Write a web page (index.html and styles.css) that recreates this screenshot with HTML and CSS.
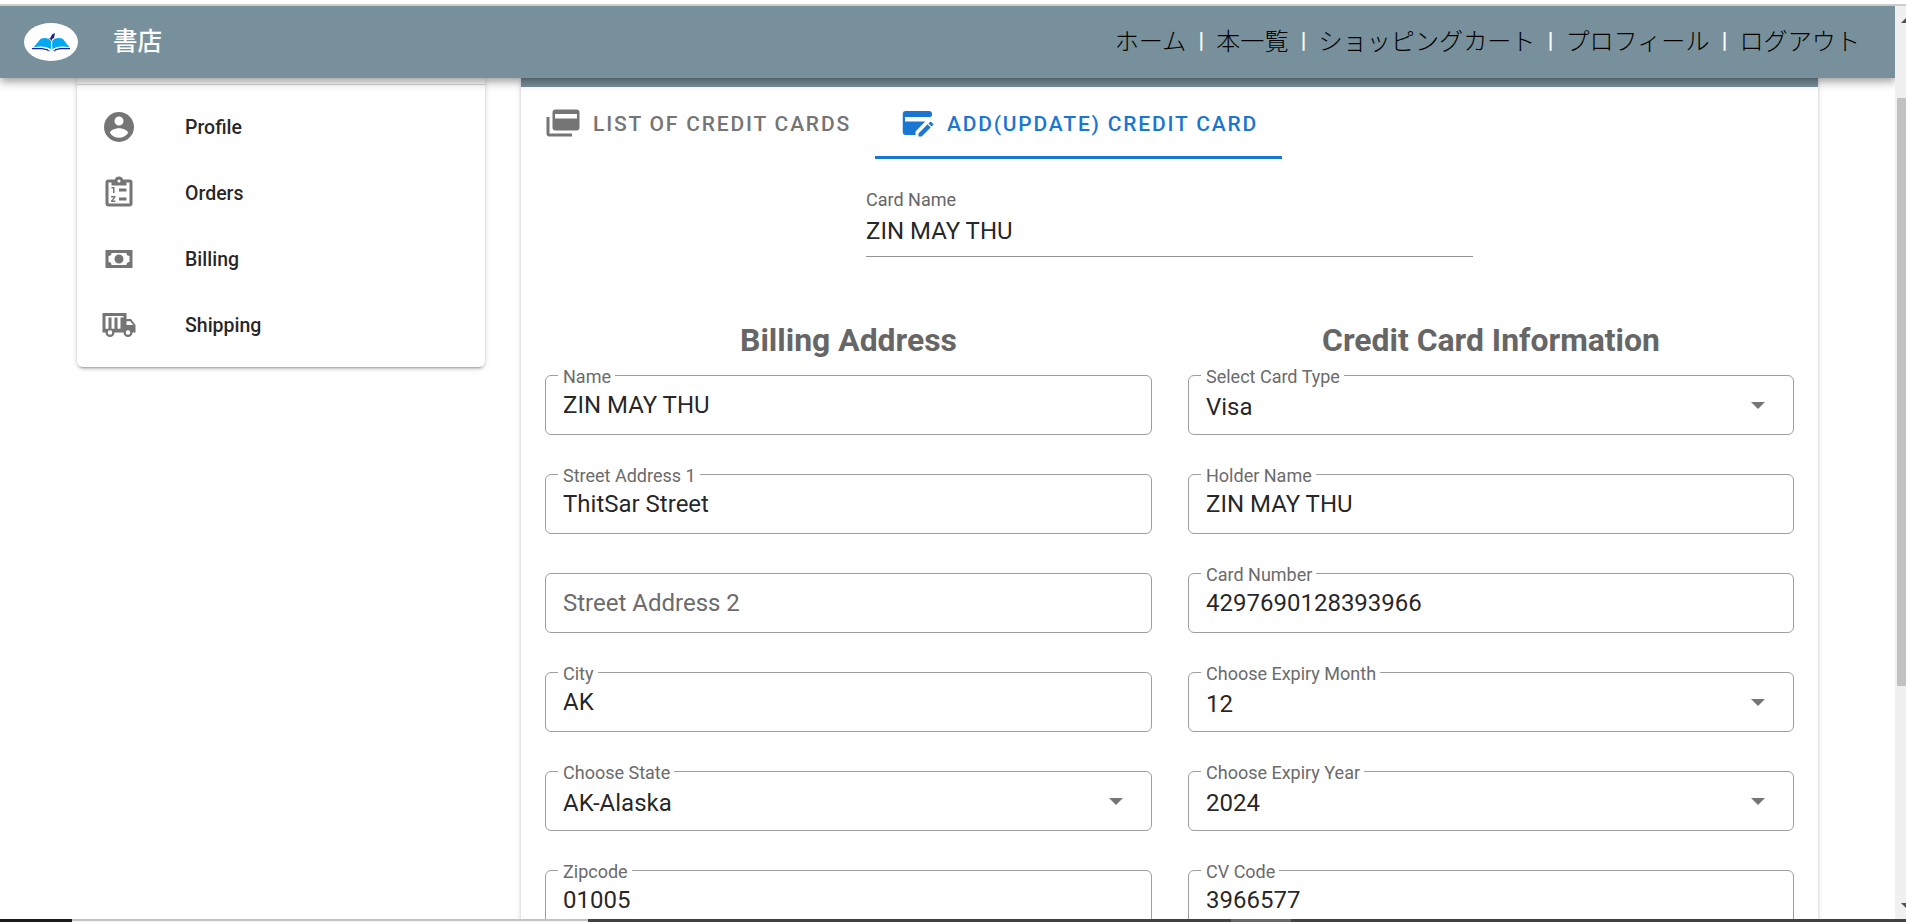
FILE: index.html
```html
<!DOCTYPE html>
<html lang="ja">
<head>
<meta charset="utf-8">
<title>書店</title>
<link rel="stylesheet" href="styles.css">
</head>
<body>
<div class="window">
  <div class="window-edge"></div>
  <div class="viewport">
    <div class="page">
      <header class="app-bar">
        <svg class="logo" viewBox="0 0 54 38">
          <ellipse cx="27" cy="19" rx="27" ry="19" fill="#fff"/>
          <path d="M9.500 24.500 16.500 16Q18 15 21 15 25 15.200 27 18V26Q19 22 9.500 24.500ZM45.500 24.500 39 16Q37 15 34 15 30 15.200 28.200 18V26Q36 22 45.500 24.500Z" fill="#03a9f0"/>
          <path d="M8 25.600H18L24 26.800M46 25.600H36L31 26.800" fill="none" stroke="#23238e" stroke-width="1.200"/>
          <path d="M24.500 15.500 26 15.500 28 11.500 31 10 30 15 28 16V18L26.500 16.500Z" fill="#23238e"/>
          <path d="M23.500 27.700h2M29.500 27.700h2" stroke="#23238e" stroke-width="1"/>
        </svg>
        <div class="brand">書店</div>
        <nav class="nav">
          <a>ホーム</a><i>|</i><a>本一覧</a><i>|</i><a>ショッピングカート</a><i>|</i><a>プロフィール</a><i>|</i><a>ログアウト</a>
        </nav>
      </header>
      <main class="content">
        <aside class="menu">
          <div class="menu-item">
            <svg class="icon" viewBox="0 0 24 24"><path d="M12,19.2C9.5,19.2 7.29,17.92 6,16C6.03,14 10,12.9 12,12.9C14,12.9 17.97,14 18,16C16.71,17.92 14.5,19.2 12,19.2M12,5A3,3 0 0,1 15,8A3,3 0 0,1 12,11A3,3 0 0,1 9,8A3,3 0 0,1 12,5M12,2A10,10 0 0,0 2,12A10,10 0 0,0 12,22A10,10 0 0,0 22,12C22,6.47 17.5,2 12,2Z"/></svg>
            <span>Profile</span>
          </div>
          <div class="menu-item">
            <svg class="icon" viewBox="0 0 24 24"><path fill-rule="evenodd" d="M19,3H14.82C14.4,1.84 13.3,1 12,1S9.600,1.840 9.180,3H5A2,2 0 0 0 3,5V19A2,2 0 0 0 5,21H19A2,2 0 0 0 21,19V5A2,2 0 0 0 19,3ZM12,3A1,1 0 1 1 12,5A1,1 0 1 1 12,3ZM5,5H7V7H17V5H19V19H5Z"/><path d="M12,9H17V11H12ZM12,15H17V17H12ZM7,8H9V12H8V9H7ZM6.750,14H9.600V15L7.900,17H9.600V18H6.750V17L8.500,15H6.750Z"/></svg>
            <span>Orders</span>
          </div>
          <div class="menu-item">
            <svg class="icon" viewBox="0 0 24 24"><path d="M3,6H21V18H3V6M12,9A3,3 0 0,1 15,12A3,3 0 0,1 12,15A3,3 0 0,1 9,12A3,3 0 0,1 12,9M7,8A2,2 0 0,1 5,10V14A2,2 0 0,1 7,16H17A2,2 0 0,1 19,14V10A2,2 0 0,1 17,8H7Z"/></svg>
            <span>Billing</span>
          </div>
          <div class="menu-item">
            <svg class="icon" viewBox="0 0 24 24"><path fill-rule="evenodd" d="M1,4H17V8H20L23,12V17H21A3,3 0 0 1 15,17H9A3,3 0 0 1 3,17H1ZM3,6V14.500H5V7H7V14.500H9V7H11V14.500H13V7H15V6ZM17,9.500V12H21.460L19.500,9.500ZM6,15.500A1.500,1.500 0 1 0 6,18.500A1.500,1.500 0 1 0 6,15.500ZM18,15.500A1.500,1.500 0 1 0 18,18.500A1.500,1.500 0 1 0 18,15.500Z"/></svg>
            <span>Shipping</span>
          </div>
        </aside>
        <section class="card">
          <div class="card-band"></div>
          <div class="tabs">
            <div class="tab">
              <svg class="icon" viewBox="0 0 24 24"><path fill-rule="evenodd" d="M7,3H21A2,2 0 0 1 23,5V15A2,2 0 0 1 21,17H7A2,2 0 0 1 5,15V5A2,2 0 0 1 7,3ZM6.700,6V9H21.300V6ZM3,19H18V21H3A2,2 0 0 1 1,19V8H3Z"/></svg>
              <span>List of Credit Cards</span>
            </div>
            <div class="tab tab-active">
              <svg class="icon" viewBox="0 0 24 24"><path d="M4.500,4H20A2,2 0 0 1 22,6V7L21,8H4V11H17.500L11,17.700V20H4.500A2,2 0 0 1 2.500,18V6A2,2 0 0 1 4.500,4ZM21.040,11.140C21.180,11.140 21.310,11.200 21.420,11.300L22.700,12.580C22.920,12.790 22.920,13.140 22.700,13.350L21.700,14.350L19.650,12.300L20.650,11.300C20.760,11.200 20.900,11.140 21.040,11.140M19.060,12.880L21.110,14.930L15.060,21H13V18.940Z"/></svg>
              <span>Add(Update) Credit Card</span>
            </div>
          </div>
          <div class="card-name">
            <div class="card-name-label">Card Name</div>
            <div class="card-name-value">ZIN MAY THU</div>
          </div>
          <div class="columns">
            <div class="column">
              <h2>Billing Address</h2>
              <div class="field"><label>Name</label><span>ZIN MAY THU</span></div>
              <div class="field"><label>Street Address 1</label><span>ThitSar Street</span></div>
              <div class="field field-empty"><span>Street Address 2</span></div>
              <div class="field"><label>City</label><span>AK</span></div>
              <div class="field field-select"><label>Choose State</label><span>AK-Alaska</span><b class="caret"></b></div>
              <div class="field"><label>Zipcode</label><span>01005</span></div>
            </div>
            <div class="column">
              <h2>Credit Card Information</h2>
              <div class="field field-select"><label>Select Card Type</label><span>Visa</span><b class="caret"></b></div>
              <div class="field"><label>Holder Name</label><span>ZIN MAY THU</span></div>
              <div class="field"><label>Card Number</label><span>4297690128393966</span></div>
              <div class="field field-select"><label>Choose Expiry Month</label><span>12</span><b class="caret"></b></div>
              <div class="field field-select"><label>Choose Expiry Year</label><span>2024</span><b class="caret"></b></div>
              <div class="field"><label>CV Code</label><span>3966577</span></div>
            </div>
          </div>
        </section>
      </main>
    </div>
    <div class="scrollbar">
      <svg class="arrow" viewBox="0 0 5 5"><path d="M0 5 5 0V5Z" fill="#505050"/></svg>
      <div class="thumb"></div>
      <svg class="arrow" viewBox="0 0 5 5"><path d="M0 0 5 5V0Z" fill="#505050"/></svg>
    </div>
  </div>
  <div class="taskbar"><i class="task-start"></i><i class="task-search"></i><i class="task-apps"></i><i class="task-current"></i><i class="task-rest"></i></div>
</div>
</body>
</html>
```
FILE: styles.css
```css
* { box-sizing: border-box; }
body { margin: 0; background: #fff; font-family: Roboto, "Noto Sans CJK JP", sans-serif; color: rgba(0,0,0,.87); }
i { font-style: normal; }
.window { display: flex; flex-direction: column; width: 1906px; height: 922px; overflow: hidden; padding-top: 4px; }
.window-edge { flex: none; height: 2px; background: #ccc; }
.viewport { display: flex; height: 913px; overflow: hidden; }
.page { width: 1895px; overflow: hidden; }

.app-bar { position: relative; z-index: 2; display: flex; align-items: center; height: 72px; padding: 0 35px 0 24px; background: #78909c; box-shadow: 0 3px 6px -1.5px rgba(0,0,0,.2), 0 6px 7.5px rgba(0,0,0,.14), 0 1.5px 15px rgba(0,0,0,.12); }
.logo { width: 54px; height: 38px; }
.brand { margin: -4px 0 0 35px; color: #fff; font: 500 24.5px/36px "Noto Sans CJK JP", sans-serif; }
.nav { display: flex; margin: -2px 0 0 auto; font: 300 24.1px/36px "Noto Sans CJK JP", sans-serif; color: #000; }
.nav i { width: 30px; text-align: center; color: #fff; font: 700 22px/38px Roboto, sans-serif; }

.content { display: flex; align-items: flex-start; padding: 0 77px; gap: 36px; height: 841px; }
.menu { width: 408px; height: 289px; padding-top: 16px; border-radius: 0 0 6px 6px; box-shadow: 0 4px 2px -3px rgba(0,0,0,.2), 0 2px 3px rgba(0,0,0,.14), 0 1px 6px rgba(0,0,0,.12); background: linear-gradient(#d9d9d9, #d9d9d9) 0 6px / 100% 1px no-repeat, #fff; }
.menu-item { display: flex; align-items: center; height: 66px; padding-left: 24px; gap: 48px; font-size: 19.5px; font-weight: 500; }
.icon { width: 36px; height: 36px; flex: none; fill: #757575; }

.card { width: 1297px; height: 900px; box-shadow: 0 4px 2px -3px rgba(0,0,0,.2), 0 2px 3px rgba(0,0,0,.14), 0 1px 6px rgba(0,0,0,.12); }
.card-band { height: 9px; background: #78909c; }
.tabs { display: flex; height: 72px; }
.tab { display: flex; align-items: center; gap: 12px; padding: 0 24px; color: #757575; font-size: 21px; font-weight: 500; letter-spacing: 1.81px; text-transform: uppercase; white-space: nowrap; border-bottom: 3px solid transparent; border-top: 2px solid transparent; }
.tab span { padding-top: 2px; }
.tab-active { color: #1976d2; border-bottom-color: #1976d2; }
.tab-active .icon { fill: #1976d2; }

.card-name { width: 607px; height: 66px; margin: 32px auto 0; border-bottom: 1px solid #949494; }
.card-name-label { font-size: 18px; line-height: 18px; color: #666; }
.card-name-value { margin-top: 8px; font-size: 24px; line-height: 28px; }

.columns { display: grid; grid-template-columns: 607px 606px; gap: 36px; padding: 60px 24px 0; }
h2 { margin: 0; height: 58px; font-size: 31.9px; line-height: 47px; font-weight: 700; color: #666; text-align: center; }
.field { position: relative; display: flex; align-items: center; height: 60px; margin-bottom: 39px; padding: 0 28px 0 17px; border: 1px solid #9e9e9e; border-radius: 6px; font-size: 24px; line-height: 28px; }
.field label { position: absolute; left: 12px; top: -11px; padding: 0 4px 0 5px; background: #fff; color: #6b6b6b; font-size: 18px; line-height: 24px; }
.field span { flex: 1; }
.field-empty { color: #6b6b6b; }
.field-select span { padding-top: 4px; }
.caret { border: 7.5px solid transparent; border-top-color: #757575; border-bottom: 0; }

.scrollbar { display: flex; flex-direction: column; align-items: flex-end; width: 11px; padding-top: 12px; padding-bottom: 11px; background: #f0f0f0; }
.arrow { width: 5px; height: 5px; }
.thumb { width: 9px; height: 588px; margin: 75px 0 auto; background: #c1c1c1; }
.taskbar { display: flex; height: 3px; }
.task-start { width: 72px; background: #1b1b1d; }
.task-search { width: 516px; background: #f2f2f2; border-top: 2px solid #c3c3c3; }
.task-apps { width: 643px; background: #424242; }
.task-current { width: 60px; background: #686868; }
.task-rest { flex: 1; background: #424242; }
```
